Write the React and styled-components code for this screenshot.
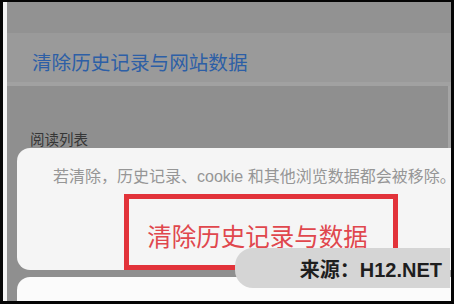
import React from 'react'
import styled, { createGlobalStyle } from 'styled-components'

const GlobalStyle = createGlobalStyle`
  html, body {
    margin: 0;
    padding: 0;
    background: #000;
  }
  body {
    font-family: "Liberation Sans", "Noto Sans CJK SC", sans-serif;
  }
`

const Screen = styled.div`
  position: relative;
  width: 454px;
  height: 304px;
  box-sizing: border-box;
  padding: 2px 3px 3px 3px;
  background: #050505;
  display: flex;
  overflow: hidden;
`

const EdgeStrip = styled.div`
  width: 4px;
  background: #f4f4f4;
`

const Main = styled.div`
  flex: 1;
  display: flex;
  flex-direction: column;
  background: #8f8f8f;
  overflow: hidden;
  box-shadow: inset -3px 0 0 #a4a4a4;
`

const TopBand = styled.div`
  height: 31px;
  background: #929292;
`

const SettingRow = styled.div`
  height: 49px;
  box-sizing: border-box;
  padding: 17px 0 0 25px;
  background: #9a9a9a;
  color: #2d5fa6;
  font-family: "Noto Sans CJK SC", sans-serif;
  font-size: 19.6px;
  line-height: 24px;
  white-space: nowrap;
`

const Divider = styled.div`
  height: 4px;
  background: #a1a1a1;
`

const SectionTitle = styled.div`
  margin-top: 44px;
  height: 18px;
  padding-left: 23px;
  color: #363636;
  font-family: "Noto Sans CJK SC", sans-serif;
  font-size: 14.5px;
  line-height: 18px;
`

const Sheet = styled.div`
  margin-left: 10px;
  width: 520px;
  height: 122px;
  flex-shrink: 0;
  background: #f5f5f5;
  border-radius: 13px;
  display: flex;
  flex-direction: column;
`

const Message = styled.div`
  height: 47px;
  box-sizing: border-box;
  padding: 19px 0 0 36px;
  color: #969696;
  font-size: 16px;
  line-height: 20px;
  white-space: nowrap;
`

const ActionRow = styled.div`
  display: flex;
  padding-left: 107px;
`

const Highlight = styled.div`
  width: 274px;
  height: 76px;
  box-sizing: border-box;
  border: 5px solid #e2333a;
  display: flex;
  align-items: center;
  justify-content: center;
  padding: 6px 7px 0 0;
  color: #e0474d;
  font-family: "Noto Sans CJK SC", sans-serif;
  font-size: 24.5px;
  white-space: nowrap;
`

const NextSheet = styled.div`
  margin: 7px 0 0 10px;
  flex: 1;
  width: 520px;
  background: #fbfbfb;
  border-radius: 13px 13px 0 0;
`

const Watermark = styled.div`
  position: absolute;
  top: 248px;
  right: 4px;
  width: 215px;
  height: 40px;
  box-sizing: border-box;
  padding-right: 8px;
  background: #d5d5d5;
  border-radius: 18px 0 0 18px;
  display: flex;
  align-items: center;
  justify-content: flex-end;
  color: #1e1e1e;
  font-size: 20px;
  font-weight: bold;
  white-space: nowrap;
`

const App = () => {
  return (
    <>
      <GlobalStyle />
      <Screen>
        <EdgeStrip />
        <Main>
          <TopBand />
          <SettingRow>清除历史记录与网站数据</SettingRow>
          <Divider />
          <SectionTitle>阅读列表</SectionTitle>
          <Sheet>
            <Message>若清除，历史记录、cookie 和其他浏览数据都会被移除。</Message>
            <ActionRow>
              <Highlight>清除历史记录与数据</Highlight>
            </ActionRow>
          </Sheet>
          <NextSheet />
        </Main>
        <Watermark>来源：H12.NET</Watermark>
      </Screen>
    </>
  )
}

export default App
